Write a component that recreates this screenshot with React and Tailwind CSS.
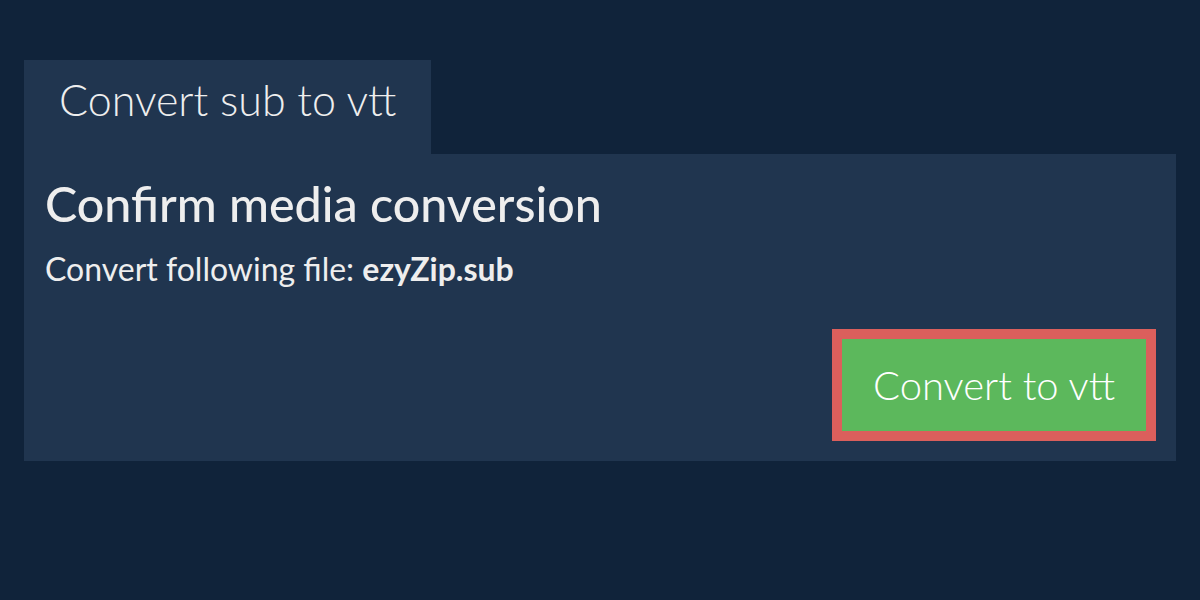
export default function App() {
  return (
    <div
      className="w-[1200px] h-[600px] bg-[#10233a] pt-[60px] px-[24px]"
      style={{ fontFamily: "Lato, 'Noto Sans', sans-serif" }}
    >
      <div className="flex">
        <div className="w-[407px] h-[94px] bg-[#20354f] pl-[35px] pt-[14px] text-[43px] font-light text-[#eeeeee] leading-[52px]">
          Convert sub to vtt
        </div>
      </div>
      <div className="bg-[#20354f] h-[307px] pl-[21px] pr-[20px] pt-[21px] flex flex-col">
        <h1 className="text-[48.4px] font-medium text-[#eeeeee] leading-[56px]">
          Confirm media conversion
        </h1>
        <p className="mt-[18px] text-[32px] text-[#eeeeee] leading-[40px]">
          Convert following file: <span className="font-bold">ezyZip.sub</span>
        </p>
        <div className="flex justify-end mt-auto mb-[20px]">
          <button className="w-[324px] h-[112px] border-[10px] border-[#db5f5c] bg-[#5cb85c] text-white text-[40px] font-light">
            Convert to vtt
          </button>
        </div>
      </div>
    </div>
  );
}
